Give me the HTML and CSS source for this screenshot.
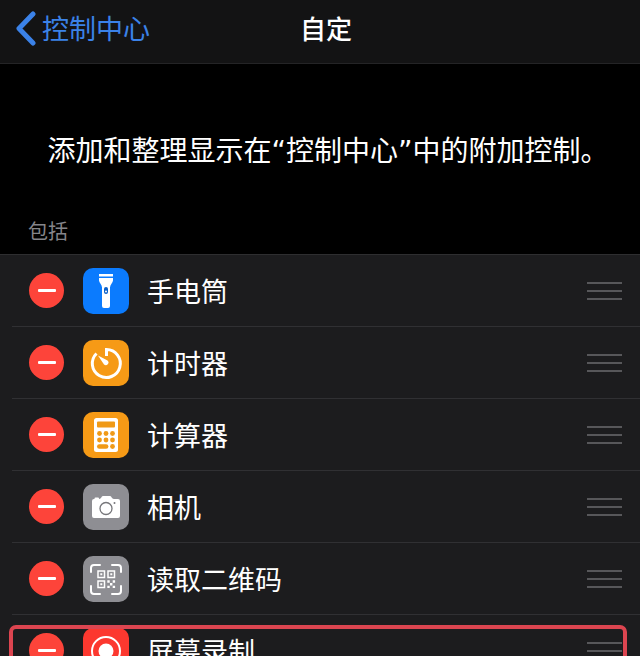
FILE: index.html
```html
<!DOCTYPE html>
<html lang="zh-CN">
<head>
<meta charset="utf-8">
<meta name="viewport" content="width=device-width, initial-scale=1">
<title>自定</title>
<link rel="stylesheet" href="styles.css">
</head>
<body>
<div class="screen">
  <header class="navbar">
    <a class="back" href="#">
      <svg class="chevron" viewBox="0 0 20 36" aria-hidden="true"><path d="M17 4 3 18.500 17 33" fill="none" stroke="currentColor" stroke-width="5" stroke-linecap="round" stroke-linejoin="round"/></svg>
      <span>控制中心</span>
    </a>
    <h1 class="title">自定</h1>
  </header>
  <main>
    <p class="intro">添加和整理显示在“控制中心”中的附加控制。</p>
    <h2 class="section">包括</h2>
    <ul class="list">
      <li class="row">
        <button class="remove" aria-label="移除手电筒"></button>
        <svg class="tile blue" viewBox="0 0 46 46" aria-hidden="true">
          <path fill="#fff" d="M16 6h14v2.500H16zM16 10h14v2.500c0 2-3 4-3 7V38q0 2-2 2h-4q-2 0-2-2V19.500c0-3-3-5-3-7z"/>
          <rect x="21" y="19" width="4" height="7" rx="2" fill="#0a5fc8"/><circle cx="23" cy="23.500" r="1" fill="#fff"/>
        </svg>
        <span class="name">手电筒</span>
        <button class="grip" aria-label="移动手电筒"></button>
      </li>
      <li class="row">
        <button class="remove" aria-label="移除计时器"></button>
        <svg class="tile orange" viewBox="0 0 46 46" aria-hidden="true">
          <path d="M23.500 16V9.500A14 14 0 1 1 13.500 13.500" fill="none" stroke="#fff" stroke-width="3"/>
          <path fill="#fff" d="M15 15.500 24.500 20.500a2.600 2.600 0 1 1-3.500 4z"/>
        </svg>
        <span class="name">计时器</span>
        <button class="grip" aria-label="移动计时器"></button>
      </li>
      <li class="row">
        <button class="remove" aria-label="移除计算器"></button>
        <svg class="tile orange" viewBox="0 0 46 46" aria-hidden="true">
          <rect x="11" y="6" width="24" height="34" rx="2.500" fill="#fff"/>
          <g fill="#f09a17">
            <rect x="14" y="9.500" width="18" height="6" rx="1"/>
            <circle cx="16.500" cy="21.500" r="2.400"/><circle cx="23" cy="21.500" r="2.400"/><circle cx="29.500" cy="21.500" r="2.400"/>
            <circle cx="16.500" cy="28" r="2.400"/><circle cx="23" cy="28" r="2.400"/><circle cx="29.500" cy="28" r="2.400"/>
            <rect x="14" y="32.200" width="11.400" height="4.600" rx="2.300"/><circle cx="29.500" cy="34.500" r="2.400"/>
          </g>
        </svg>
        <span class="name">计算器</span>
        <button class="grip" aria-label="移动计算器"></button>
      </li>
      <li class="row">
        <button class="remove" aria-label="移除相机"></button>
        <svg class="tile gray" viewBox="0 0 46 46" aria-hidden="true">
          <path fill="#fff" d="M11.500 15v-.5q0-1 1-1h2.500q1 0 1 1v.5q1 0 2-1l.6-1q.4-1 1.600-1h6.600q1.200 0 1.600 1l.6 1q1 1 2 1H35q2 0 2 2V32q0 2-2 2H11q-2 0-2-2V17q0-2 2-2z"/>
          <circle cx="23" cy="24.500" r="6" fill="none" stroke="#77777b" stroke-width="1.300"/>
          <circle cx="31.500" cy="19" r="1" fill="#77777b"/>
        </svg>
        <span class="name">相机</span>
        <button class="grip" aria-label="移动相机"></button>
      </li>
      <li class="row">
        <button class="remove" aria-label="移除读取二维码"></button>
        <svg class="tile gray" viewBox="0 0 46 46" aria-hidden="true">
          <g fill="none" stroke="#fff">
            <path stroke-width="2" stroke-linecap="round" d="M8 16v-4q0-3 3-3h6M29 9h6q3 0 3 3v4M38 30v5q0 3-3 3h-6M17 38h-6q-3 0-3-3v-5"/>
            <path stroke-width="1.500" d="M15 15h6.500v6.500H15zM25 15h6.500v6.500H25zM15 25h6.500v6.500H15z"/>
          </g>
          <path fill="#fff" d="M17.300 17.300h2v2h-2zM27.300 17.300h2v2h-2zM17.300 27.300h2v2h-2zM24.300 24.300h2.400v2.400h-2.400zM29.700 24.300h2.400v2.400h-2.400zM27 27h2.400v2.400H27zM24.300 29.700h2.400v2.400h-2.400zM29.700 29.700h2.400v2.400h-2.400z"/>
        </svg>
        <span class="name">读取二维码</span>
        <button class="grip" aria-label="移动读取二维码"></button>
      </li>
      <li class="row marked">
        <button class="remove" aria-label="移除屏幕录制"></button>
        <svg class="tile red" viewBox="0 0 46 46" aria-hidden="true">
          <circle cx="23" cy="23" r="14" fill="none" stroke="#fff" stroke-width="2"/>
          <circle cx="23" cy="23" r="7.500" fill="#fff"/>
        </svg>
        <span class="name">屏幕录制</span>
        <button class="grip" aria-label="移动屏幕录制"></button>
      </li>
    </ul>
  </main>
</div>
</body>
</html>
```
FILE: styles.css
```css
* {
  box-sizing: border-box;
}

body {
  margin: 0;
  background: #000;
  color: #fff;
  font-family: "Noto Sans CJK SC", sans-serif;
}

.screen {
  height: 100vh;
  overflow: hidden;
}

.navbar {
  display: grid;
  grid-template-columns: 1fr auto 1fr;
  align-items: center;
  height: 64px;
  padding: 0 4px 8px 16px;
  background: #131314;
  border-bottom: 1px solid #242426;
}

.back {
  display: flex;
  align-items: center;
  gap: 6px;
  color: #3b82e8;
  font-size: 27px;
  line-height: 40px;
  text-decoration: none;
}

.chevron {
  width: 20px;
  height: 36px;
}

.title {
  margin: 0;
  font-size: 26px;
  font-weight: 500;
  line-height: 40px;
}

.intro {
  margin: 0;
  padding: 68px 16px 0 32px;
  font-family: "DejaVu Sans", "Noto Sans CJK SC", sans-serif;
  font-size: 28px;
  line-height: 40px;
  text-align: center;
}

.section {
  margin: 0;
  padding: 43px 28px 8px;
  color: #85858a;
  font-size: 20px;
  font-weight: 400;
  line-height: 31px;
}

.list {
  margin: 0;
  padding: 0;
  list-style: none;
  background: #1c1c1e;
  border-top: 1px solid #2e2e30;
}

.row {
  display: flex;
  align-items: center;
  position: relative;
  height: 72px;
  margin-left: 12px;
  padding: 0 18px 0 17px;
  border-bottom: 1px solid #303033;
}

.remove {
  display: grid;
  place-items: center;
  width: 35px;
  height: 35px;
  padding: 0;
  border: 0;
  border-radius: 50%;
  background: #fd443a;
}

.remove::before {
  content: "";
  width: 18px;
  height: 3px;
  border-radius: 1px;
  background: #fff;
}

.tile {
  width: 46px;
  height: 46px;
  margin: 0 18px 0 19px;
  border-radius: 10px;
}

.blue {
  background: #0b7bfe;
}

.orange {
  background: #f69a16;
}

.gray {
  background: #8e8e93;
}

.red {
  background: #fc382f;
}

.name {
  flex: 1;
  font-size: 27px;
  line-height: 40px;
}

.grip {
  width: 35px;
  height: 18px;
  padding: 0;
  border: solid #57575a;
  border-width: 2px 0;
  background: linear-gradient(#57575a, #57575a) center / 100% 2px no-repeat;
}

.marked::after {
  content: "";
  position: absolute;
  inset: 10px 13px -10px -3px;
  border: 4px solid #dc4550;
  border-radius: 7px;
}
```
